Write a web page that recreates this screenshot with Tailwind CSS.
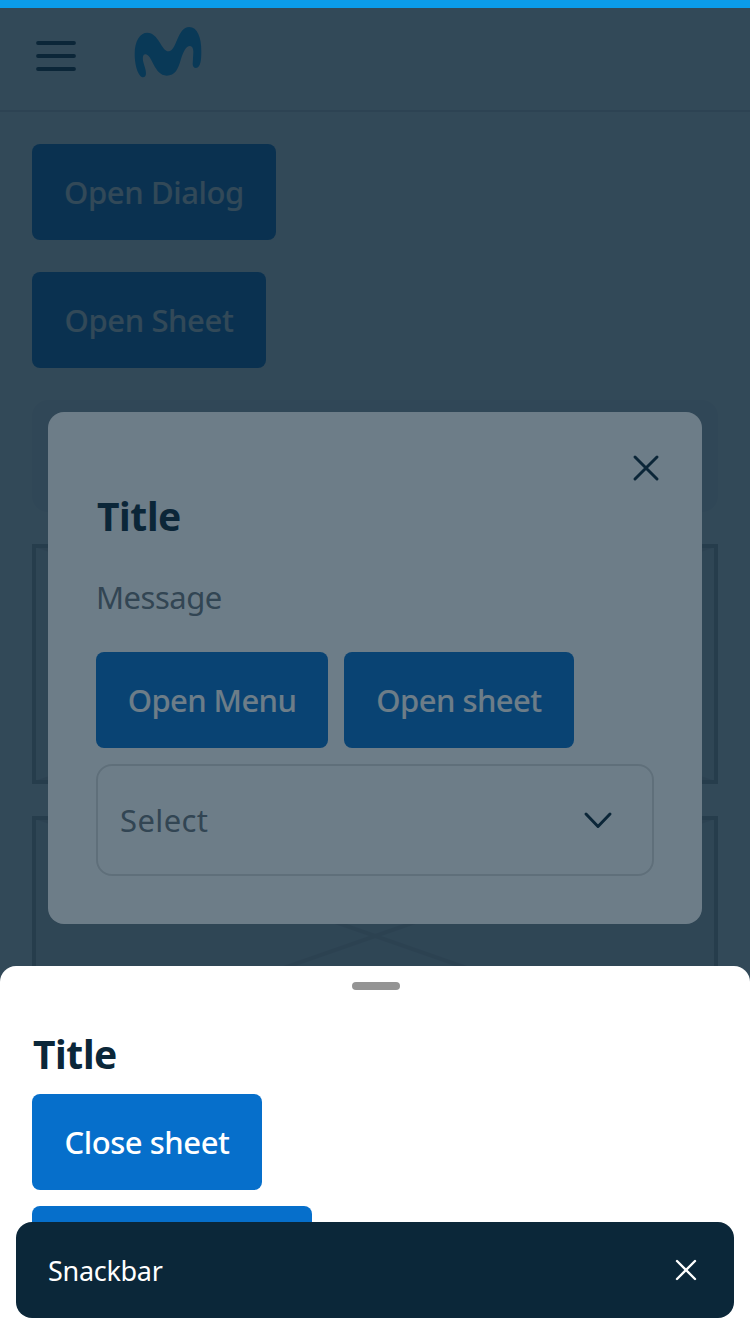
<!DOCTYPE html>
<html lang="en">
<head>
<meta charset="utf-8">
<meta name="viewport" content="width=device-width">
<title>Overlays</title>
<script src="https://cdn.jsdelivr.net/npm/@tailwindcss/browser@4"></script>
</head>
<body class="relative h-[1334px] w-[750px] overflow-hidden bg-white font-['Noto_Sans',sans-serif] text-[31px] text-[#0b2739]">
  <!-- Page -->
  <div class="h-full overflow-hidden">
    <header class="flex h-28 items-center gap-[52px] border-b-2 border-[#dddddd] pt-0.5 pl-8">
      <svg class="size-12" viewBox="0 0 48 48" fill="none" stroke="#0b2739" stroke-width="3.8" stroke-linecap="round"><path d="M6 11H42M6 24H42M6 37H42"/></svg>
      <svg class="-mt-2 h-[60px] w-[72px]" viewBox="396 66 216 180" fill="#019df4"><path d="M404 162C404 122 420 98 442 98C476 98 484 154 506 154C530 154 531 81 568 81C592 81 604 112 604 154C604 176 603 204 588 204C581 204 578 199 578 192C578 180 580 168 580 156C580 144 576 138 570 138C558 138 549 157 543 177C534 208 526 227 500 227C462 227 457 163 436 163C427 163 428 178 430 186C433 198 438 208 438 220C438 228 435 232 429 232C416 232 404 198 404 162Z"/></svg>
    </header>
    <main class="flex flex-col items-start gap-8 px-8 pt-8">
      <button class="flex h-24 w-[244px] shrink-0 items-center justify-center rounded-lg bg-[#066fcb] font-medium tracking-[-0.38px] whitespace-nowrap text-white"><span>Open Dialog</span></button>
      <button class="flex h-24 w-[234px] shrink-0 items-center justify-center rounded-lg bg-[#066fcb] font-medium tracking-[-0.4px] whitespace-nowrap text-white"><span>Open Sheet</span></button>
      <div class="h-28 w-[686px] shrink-0 rounded-2xl bg-[#f2f4f4]"></div>
      <svg class="h-60 w-[686px] shrink-0" viewBox="0 0 686 240" fill="none" stroke-width="4"><path fill="#eaeaea" d="M0 0H686V240H0Z"/><path stroke="#d5d5d5" d="M0 0L686 240M686 0L0 240"/><path stroke="#b3b3b3" d="M2 2H684V238H2Z"/></svg>
      <svg class="h-60 w-[686px] shrink-0" viewBox="0 0 686 240" fill="none" stroke-width="4"><path fill="#eaeaea" d="M0 0H686V240H0Z"/><path stroke="#d5d5d5" d="M0 0L686 240M686 0L0 240"/><path stroke="#b3b3b3" d="M2 2H684V238H2Z"/></svg>
    </main>
  </div>

  <!-- Dialog -->
  <div class="absolute inset-0 bg-[#0b2739]/60"></div>
  <section class="absolute top-[412px] left-12 flex h-[512px] w-[654px] flex-col rounded-2xl bg-white px-12 pt-8">
    <div class="-mr-4 flex justify-end">
      <svg class="size-12" viewBox="0 0 48 48" fill="none" stroke="#0b2739" stroke-width="3" stroke-linecap="round"><path d="M13 13L35 35M35 13L13 35"/></svg>
    </div>
    <h2 class="h-12 pl-px text-[39px] leading-[48px] font-bold tracking-[-0.4px]"><span>Title</span></h2>
    <p class="mt-8 h-20 leading-[50px] tracking-[-0.5px] text-[#6b737b]"><span>Message</span></p>
    <div class="flex gap-4">
      <button class="flex h-24 w-[232px] items-center justify-center rounded-lg bg-[#066fcb] font-medium tracking-[-0.6px] whitespace-nowrap text-white"><span>Open Menu</span></button>
      <button class="flex h-24 w-[230px] items-center justify-center rounded-lg bg-[#066fcb] font-medium tracking-[-0.55px] whitespace-nowrap text-white"><span>Open sheet</span></button>
    </div>
    <div class="mt-4 flex h-28 w-[558px] items-center justify-between rounded-2xl border-2 border-[#dddddd] pr-[30px] pl-[22px] text-[#6b737b]">
      <span class="tracking-[0.4px]">Select</span>
      <svg class="size-12" viewBox="0 0 48 48" fill="none" stroke="#0b2739" stroke-width="3" stroke-linecap="round" stroke-linejoin="round"><path d="M12 18L24 30.5L36 18"/></svg>
    </div>
  </section>

  <!-- Sheet -->
  <div class="absolute inset-0 bg-[#0b2739]/60"></div>
  <section class="absolute inset-x-0 top-[966px] bottom-0 flex flex-col items-start rounded-t-2xl bg-white px-8 pt-4">
    <div class="ml-80 h-2 w-12 shrink-0 rounded-full bg-[#949494]"></div>
    <h2 class="mt-10 h-16 shrink-0 pl-px text-[39px] leading-[48px] font-bold tracking-[-0.4px]"><span>Title</span></h2>
    <button class="flex h-24 w-[230px] shrink-0 items-center justify-center rounded-lg bg-[#066fcb] font-medium tracking-[-0.45px] whitespace-nowrap text-white"><span>Close sheet</span></button>
    <div class="mt-4 h-24 w-[280px] shrink-0 rounded-lg bg-[#066fcb]"></div>
  </section>

  <!-- Snackbar -->
  <div class="absolute top-[1222px] left-4 flex h-24 w-[718px] items-center justify-between rounded-2xl bg-[#0b2739] pr-7 pl-8 text-[27px] text-white">
    <span class="pt-0.5 tracking-[-0.3px]">Snackbar</span>
    <svg class="size-10" viewBox="0 0 40 40" fill="none" stroke="#fff" stroke-width="2.4" stroke-linecap="round"><path d="M11 11L29 29M29 11L11 29"/></svg>
  </div>

  <!-- Progress bar -->
  <div class="absolute inset-x-0 top-0 h-2 bg-[#0b9cea]"></div>
</body>
</html>
